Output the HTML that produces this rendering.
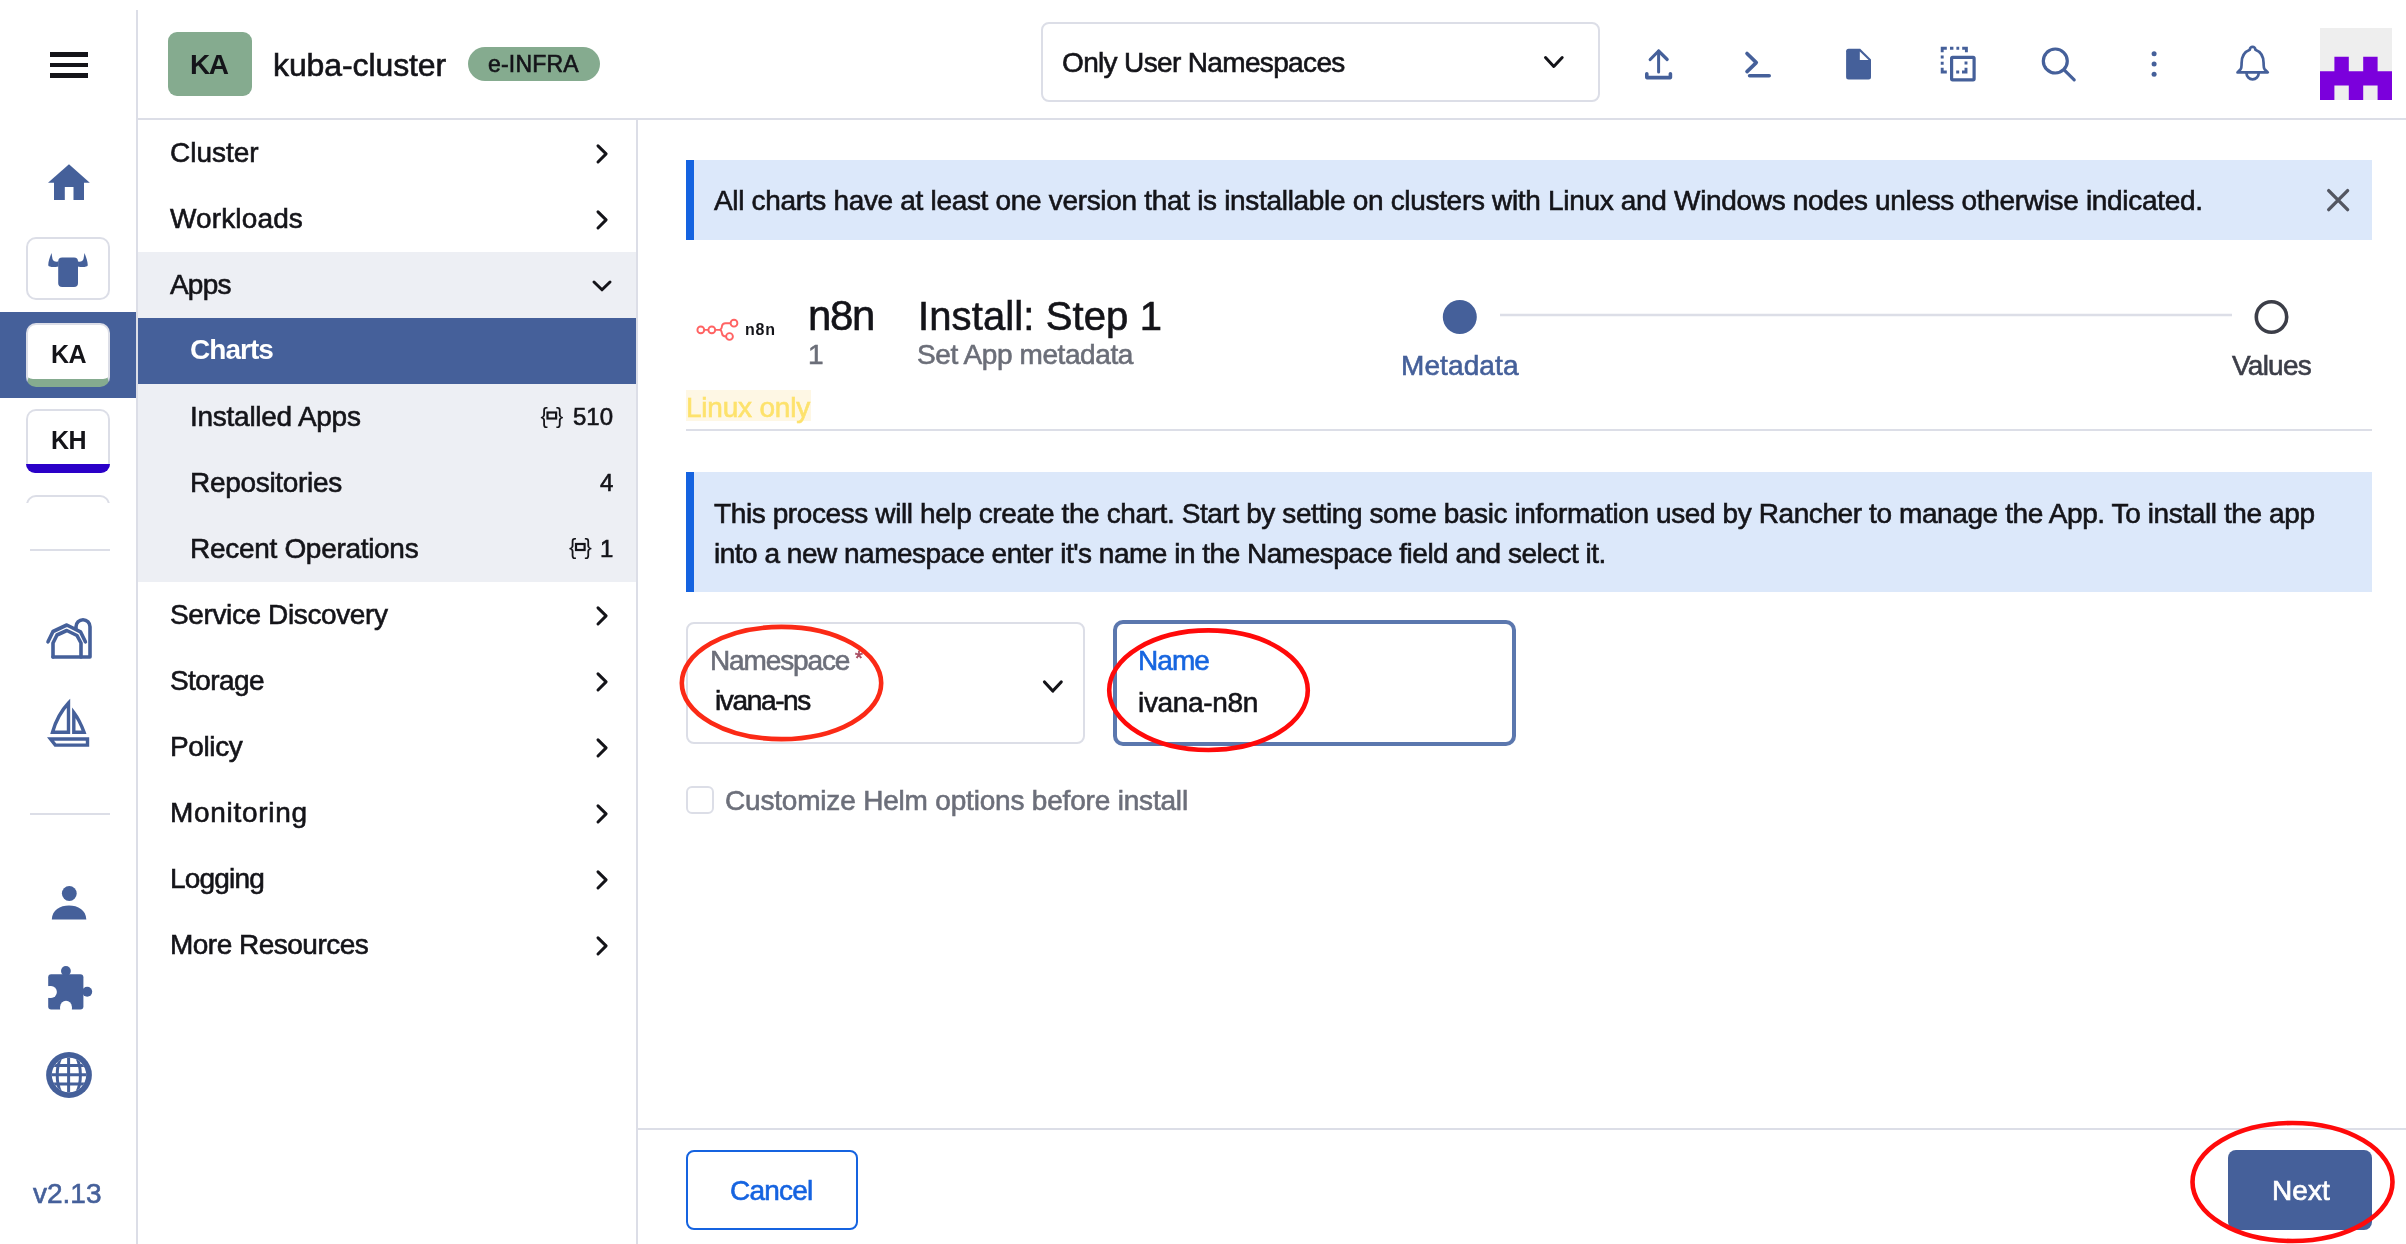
<!DOCTYPE html>
<html><head><meta charset="utf-8">
<style>
html,body{margin:0;padding:0;width:2406px;height:1244px;overflow:hidden;background:#fff;}
body{position:relative;font-family:"Liberation Sans",sans-serif;color:#141419;}
.a{position:absolute;}
.t{position:absolute;white-space:nowrap;line-height:1;will-change:transform;-webkit-text-stroke:0.6px currentColor;}
svg{position:absolute;display:block;overflow:visible;}
</style></head><body>

<!-- ===== LEFT RAIL ===== -->
<div class="a" style="left:136px;top:10px;width:2px;height:1234px;background:#dcdee7"></div>
<div class="a" style="left:50px;top:52px;width:38px;height:5px;background:#141419"></div>
<div class="a" style="left:50px;top:63px;width:38px;height:4px;background:#141419"></div>
<div class="a" style="left:50px;top:73px;width:38px;height:5px;background:#141419"></div>
<!-- home -->
<svg style="left:0;top:0" width="140" height="1244">
  <g fill="#45609a">
    <path d="M48 182.7 L69 164.2 L89.8 182.7 Z"/>
    <path d="M54 181 H84 V200 H73.5 V187 H64.8 V200 H54 Z"/>
  </g>
</svg>
<!-- bull box -->
<div class="a" style="left:26px;top:237px;width:80px;height:59px;border:2px solid #dcdee7;border-radius:10px;background:#fff"></div>
<svg style="left:0;top:0" width="140" height="320">
  <g fill="#45609a">
    <rect x="58.2" y="257.5" width="19.8" height="29.5" rx="4"/>
    <path d="M51.5 253 C50 257 48 262 48.3 265.5 C49 267 53 267.5 58.5 266.5 L58.5 261.5 C55 262 53 261 52.5 259 Z"/>
    <path d="M84.5 253 C86 257 88 262 87.7 265.5 C87 267 83 267.5 77.5 266.5 L77.5 261.5 C81 262 83 261 83.5 259 Z"/>
  </g>
</svg>
<!-- active band -->
<div class="a" style="left:0;top:312px;width:136px;height:86px;background:#45609a"></div>
<div class="a" style="left:26px;top:323px;width:80px;height:54px;border:2px solid #dcdee7;border-bottom:8px solid #85ab8f;border-radius:10px;background:#fff"></div>
<div class="t" style="left:51px;top:342px;font-size:25px;font-weight:bold;-webkit-text-stroke:0;letter-spacing:-0.5px">KA</div>
<!-- KH box -->
<div class="a" style="left:26px;top:409px;width:80px;height:62px;border:2px solid #dcdee7;border-bottom:0;border-radius:10px 10px 10px 10px;background:#fff;overflow:hidden"></div>
<div class="a" style="left:26px;top:464px;width:84px;height:9px;background:#2a00c8;border-radius:0 0 10px 10px"></div>
<div class="t" style="left:51px;top:428px;font-size:25px;font-weight:bold;-webkit-text-stroke:0;letter-spacing:-0.5px">KH</div>
<!-- partial third box -->
<div class="a" style="left:26px;top:495px;width:84px;height:8px;overflow:hidden">
  <div class="a" style="left:0;top:0;width:80px;height:40px;border:2px solid #dcdee7;border-radius:10px"></div>
</div>
<div class="a" style="left:30px;top:549px;width:80px;height:2px;background:#dcdee7"></div>
<!-- barn -->
<svg style="left:40px;top:610px" width="60" height="55">
  <g fill="none" stroke="#45609a" stroke-width="3.6" stroke-linecap="round" stroke-linejoin="round">
    <path d="M8 31.8 L13 21.5 L26.8 15 L40.5 21.8 L45.4 31.8"/>
    <path d="M13 47 V33 L17 25 L26.8 20.5 L37 25.5 L41 33 V47"/>
    <path d="M13 47 H50 V16.8 A7 7 0 0 0 36 16.8 V18.5"/>
  </g>
</svg>
<!-- sailboat -->
<svg style="left:0;top:0" width="140" height="760">
  <g fill="none" stroke="#45609a" stroke-width="3.4" stroke-linejoin="miter">
    <path d="M68.5 703 L68.5 732.2 L52.5 732.2 C56 720 61 711 68.5 703 Z"/>
    <path d="M73.8 712.5 L73.8 732.2 L84 732.2 C81 724 78 718 73.8 712.5 Z"/>
    <path d="M50.5 739 L87.5 739 L87.5 745.1 L55.3 745.1 Z"/>
  </g>
</svg>
<div class="a" style="left:30px;top:813px;width:80px;height:2px;background:#dcdee7"></div>
<!-- person -->
<svg style="left:0;top:0" width="140" height="1244">
  <g fill="#45609a">
    <circle cx="69.3" cy="893.5" r="7.4"/>
    <path d="M51.8 919.5 C52 910 60 905.5 69 905.5 C78 905.5 86 910 86.3 919.5 Z"/>
  </g>
  <!-- puzzle -->
  <g fill="#45609a">
    <rect x="48.2" y="974.3" width="35.2" height="35.2" rx="3"/>
    <circle cx="65.9" cy="971" r="4.9"/>
    <circle cx="87.2" cy="991.7" r="5"/>
  </g>
  <g fill="#fff">
    <circle cx="51" cy="992" r="5.9"/>
    <rect x="46" y="986.1" width="5" height="11.8"/>
    <circle cx="66" cy="1006.7" r="5.85"/>
    <rect x="60.15" y="1006.7" width="11.7" height="4"/>
  </g>
  <!-- globe -->
  <circle cx="69" cy="1075" r="22.9" fill="#45609a"/>
  <circle cx="69" cy="1075" r="17.2" fill="#fff"/>
  <clipPath id="gc"><circle cx="69" cy="1075" r="17.3"/></clipPath>
  <g fill="none" stroke="#45609a" stroke-width="3" clip-path="url(#gc)">
    <ellipse cx="68.8" cy="1075" rx="11.6" ry="24"/>
    <line x1="68.6" y1="1050" x2="68.6" y2="1100"/>
    <line x1="45" y1="1065.6" x2="93" y2="1065.6"/>
    <line x1="45" y1="1074.7" x2="93" y2="1074.7"/>
    <line x1="45" y1="1084" x2="93" y2="1084"/>
  </g>
</svg>
<div class="t" style="left:33px;top:1180px;font-size:28px;color:#45609a">v2.13</div>


<!-- ===== HEADER ===== -->
<div class="a" style="left:138px;top:118px;width:2268px;height:2px;background:#dcdee7"></div>
<div class="a" style="left:168px;top:32px;width:84px;height:64px;background:#85ab8f;border-radius:9px"></div>
<div class="t" style="left:190px;top:51px;font-size:28px;font-weight:bold;-webkit-text-stroke:0;letter-spacing:-1.5px">KA</div>
<div class="t" style="left:273px;top:49px;font-size:32px;letter-spacing:-0.1px">kuba-cluster</div>
<div class="a" style="left:468px;top:47px;width:132px;height:34px;background:#85ab8f;border-radius:17px"></div>
<div class="t" style="left:488px;top:53px;font-size:23px;letter-spacing:0.2px">e-INFRA</div>
<!-- namespace select -->
<div class="a" style="left:1041px;top:22px;width:555px;height:76px;border:2px solid #dcdee7;border-radius:8px"></div>
<div class="t" style="left:1062px;top:48.5px;font-size:28px;letter-spacing:-0.65px">Only User Namespaces</div>
<svg style="left:0;top:0" width="2406" height="118">
  <g fill="none" stroke="#141419" stroke-width="3" stroke-linecap="round" stroke-linejoin="round">
    <path d="M1545.5 57.5 L1553.8 66.5 L1562.2 57.5"/>
  </g>
  <g fill="none" stroke="#45609a" stroke-linecap="round" stroke-linejoin="round">
    <!-- upload -->
    <path d="M1658.6 51 V72" stroke-width="3"/>
    <path d="M1650.2 59.5 L1658.6 51 L1667.2 59.5" stroke-width="3.2"/>
    <path d="M1646.8 73.8 V77.6 H1670.4 V73.8" stroke-width="3.6"/>
    <!-- terminal -->
    <path d="M1747 53.5 L1756.3 62.6 L1747 71.6" stroke-width="3.6"/>
    <path d="M1749.6 75.8 H1769.2" stroke-width="3.6"/>
    <!-- copy -->
    <path d="M1942.2 52.2 V48.2 H1946.8 M1950 48.2 H1953.4 M1956.4 48.2 H1959.2 M1962.2 48.2 H1966.4 V52.2 M1942.2 55.6 V58.6 M1942.2 61.8 V64.8 M1942.2 67.8 V72 H1946.8" stroke-width="2.9" stroke-linecap="butt" stroke-linejoin="miter"/>
    <rect x="1951.6" y="57.4" width="22.5" height="22.4" rx="1" stroke-width="3.2"/>
    <path d="M1966 61.4 V64.6 M1966 67.8 V72 H1962 M1959.2 72 H1956.2" stroke-width="2.9" stroke-linecap="butt" stroke-linejoin="miter"/>
    <!-- search -->
    <circle cx="2055.3" cy="61" r="12" stroke-width="3.2"/>
    <path d="M2064.6 70.3 L2074.2 79.8" stroke-width="3.2"/>
    <!-- bell -->
    <path d="M2237.5 72.4 L2240.6 69.2 C2241.6 68 2241.6 66 2241.6 63 C2241.6 57 2243.2 52.2 2249.8 49.7 A2.5 2.5 0 1 1 2255.4 49.7 C2262 52.2 2263.6 57 2263.6 63 C2263.6 66 2263.6 68 2264.6 69.2 L2267.8 72.4 Z" stroke-width="2.7"/>
    <path d="M2246.5 73.2 A6.1 6.1 0 0 0 2258.7 73.2" stroke-width="2.7"/>
  </g>
  <g fill="#45609a">
    <!-- file -->
    <path d="M1848.6 48.8 H1860.2 L1871 59.6 V77 A2.5 2.5 0 0 1 1868.5 79.5 H1848.6 A2.5 2.5 0 0 1 1846.1 77 V51.3 A2.5 2.5 0 0 1 1848.6 48.8 Z"/>
    <path d="M1859.8 51.4 V60 H1868.6 Z" fill="#fff"/>
    <!-- kebab -->
    <circle cx="2154.1" cy="53.7" r="2.5"/>
    <circle cx="2154.1" cy="63.9" r="2.5"/>
    <circle cx="2154.1" cy="74.2" r="2.5"/>
  </g>
</svg>
<!-- avatar -->
<div class="a" style="left:2320px;top:28px;width:72px;height:72px;background:#eeeeee"></div>
<svg style="left:2320px;top:28px" width="72" height="72"><path fill="#7b00dc" d="M14.4 28.8H28.8V43.2H43.2V28.8H57.6V43.2H72V72H57.6V57.6H43.2V72H28.8V57.6H14.4V72H0V43.2H14.4Z"/></svg>


<!-- ===== NAV ===== -->
<div class="a" style="left:138px;top:252px;width:498px;height:330px;background:#edeff4"></div>
<div class="a" style="left:138px;top:318px;width:498px;height:66px;background:#45609a"></div>
<div class="t" style="left:170px;top:139.0px;font-size:28px;letter-spacing:-0.000px">Cluster</div>
<div class="t" style="left:170px;top:205.0px;font-size:28px;letter-spacing:0.135px">Workloads</div>
<div class="t" style="left:170px;top:271.0px;font-size:28px;letter-spacing:-0.807px">Apps</div>
<div class="t" style="left:170px;top:601.0px;font-size:28px;letter-spacing:-0.381px">Service Discovery</div>
<div class="t" style="left:170px;top:667.0px;font-size:28px;letter-spacing:-0.585px">Storage</div>
<div class="t" style="left:170px;top:733.0px;font-size:28px;letter-spacing:-0.381px">Policy</div>
<div class="t" style="left:170px;top:799.0px;font-size:28px;letter-spacing:0.703px">Monitoring</div>
<div class="t" style="left:170px;top:865.0px;font-size:28px;letter-spacing:-0.812px">Logging</div>
<div class="t" style="left:170px;top:931.0px;font-size:28px;letter-spacing:-0.511px">More Resources</div>
<svg style="left:0;top:0" width="640" height="1244"><g fill="none" stroke="#141419" stroke-width="3" stroke-linecap="round" stroke-linejoin="round"><path d="M598 145.9 L606.1 153.9 L598 162"/><path d="M598 211.9 L606.1 219.9 L598 228"/><path d="M594 282 L602 289.8 L610 282"/><path d="M598 607.9 L606.1 615.9 L598 624"/><path d="M598 673.9 L606.1 681.9 L598 690"/><path d="M598 739.9 L606.1 747.9 L598 756"/><path d="M598 805.9 L606.1 813.9 L598 822"/><path d="M598 871.9 L606.1 879.9 L598 888"/><path d="M598 937.9 L606.1 945.9 L598 954"/></g></svg>
<div class="t" style="left:190px;top:335.8px;font-size:28px;font-weight:bold;-webkit-text-stroke:0;color:#fff;letter-spacing:-0.951px">Charts</div>
<div class="t" style="left:190px;top:403.0px;font-size:28px;letter-spacing:-0.263px">Installed Apps</div>
<div class="t" style="left:190px;top:469.0px;font-size:28px;letter-spacing:-0.305px">Repositories</div>
<div class="t" style="left:190px;top:535.0px;font-size:28px;letter-spacing:-0.301px">Recent Operations</div>
<div class="t" style="right:1792.5px;top:404.9px;font-size:24px">510</div>
<div class="t" style="right:1792.5px;top:470.7px;font-size:24px">4</div>
<div class="t" style="right:1792.5px;top:536.9px;font-size:24px">1</div>
<svg style="left:0;top:0" width="640" height="1244"><text x="540.5" y="422.5" font-size="22" font-family="Liberation Sans" fill="#141419">{</text><text x="556.0" y="422.5" font-size="22" font-family="Liberation Sans" fill="#141419">}</text><rect x="547.5" y="412.5" width="8.6" height="6" fill="none" stroke="#141419" stroke-width="2.2"/><text x="569" y="554" font-size="22" font-family="Liberation Sans" fill="#141419">{</text><text x="584.5" y="554" font-size="22" font-family="Liberation Sans" fill="#141419">}</text><rect x="576" y="544" width="8.6" height="6" fill="none" stroke="#141419" stroke-width="2.2"/></svg>
<div class="a" style="left:636px;top:120px;width:2px;height:1124px;background:#dcdee7"></div>

<!-- ===== MAIN ===== -->
<div class="a" style="left:686px;top:160px;width:1686px;height:80px;background:#dce8fa"></div>
<div class="a" style="left:686px;top:160px;width:8px;height:80px;background:#1563e0"></div>
<div class="t" style="left:714px;top:187.0px;font-size:28px;letter-spacing:-0.318px">All charts have at least one version that is installable on clusters with Linux and Windows nodes unless otherwise indicated.</div>
<svg style="left:0;top:0" width="2406" height="1244"><g fill="none" stroke="#535661" stroke-width="3.4" stroke-linecap="round"><path d="M2328.7 190.6 L2347.6 209.6 M2347.6 190.6 L2328.7 209.6"/></g></svg>
<svg style="left:0;top:0" width="2406" height="1244"><g fill="none" stroke="#ff6363" stroke-width="1.9">
<circle cx="700.8" cy="329.9" r="3.4"/><circle cx="711.8" cy="329.9" r="3.4"/>
<circle cx="734" cy="323.2" r="3.4"/><circle cx="729.5" cy="336.5" r="3.4"/>
<path d="M704.2 329.9 H708.4 M715.2 329.9 H719.5 C721.5 329.9 721.8 328 722 326 C722.3 324 723.5 323.2 725.5 323.2 H730.6 M719.5 329.9 C721.5 329.9 721.8 331.8 722 333.5 C722.3 335.5 724 336.5 726.1 336.5"/>
</g></svg>
<div class="t" style="left:745px;top:321.7px;font-size:16px;font-weight:bold;-webkit-text-stroke:0;letter-spacing:0.744px">n8n</div>
<div class="t" style="left:807.5px;top:295.0px;font-size:42px;letter-spacing:-1.359px">n8n</div>
<div class="t" style="left:808px;top:340.6px;font-size:28px;color:#6b6e78">1</div>
<div class="t" style="left:918px;top:295.8px;font-size:40px;letter-spacing:0.108px">Install: Step 1</div>
<div class="t" style="left:917px;top:340.7px;font-size:28px;color:#6b6e78;letter-spacing:-0.416px">Set App metadata</div>
<div class="a" style="left:686px;top:390px;width:125px;height:31px;background:#fef7e4"></div>
<div class="t" style="left:686px;top:393.6px;font-size:28px;color:#fde26c;letter-spacing:-0.211px">Linux only</div>
<div class="a" style="left:686px;top:429px;width:1686px;height:2px;background:#dcdee7"></div>
<svg style="left:0;top:0" width="2406" height="1244">
<circle cx="1459.8" cy="317" r="17" fill="#45609a"/>
<line x1="1500" y1="315" x2="2232" y2="315" stroke="#dcdee7" stroke-width="2.4"/>
<circle cx="2271.5" cy="317" r="15.2" fill="none" stroke="#3c3e48" stroke-width="3.6"/>
</svg>
<div class="t" style="left:1401px;top:351.6px;font-size:28px;color:#45609a;letter-spacing:0.102px">Metadata</div>
<div class="t" style="left:2232px;top:351.6px;font-size:28px;color:#3c3e48;letter-spacing:-0.758px">Values</div>
<div class="a" style="left:686px;top:472px;width:1686px;height:120px;background:#dce8fa"></div>
<div class="a" style="left:686px;top:472px;width:8px;height:120px;background:#1563e0"></div>
<div class="t" style="left:714px;top:499.7px;font-size:28px;letter-spacing:-0.398px">This process will help create the chart. Start by setting some basic information used by Rancher to manage the App. To install the app</div>
<div class="t" style="left:714px;top:539.8px;font-size:28px;letter-spacing:-0.494px">into a new namespace enter it's name in the Namespace field and select it.</div>
<div class="a" style="left:686px;top:622px;width:395px;height:118px;border:2px solid #dcdee7;border-radius:8px"></div>
<div class="t" style="left:709.5px;top:646.7px;font-size:28px;color:#6c6f7a;letter-spacing:-1.126px">Namespace</div>
<div class="t" style="left:855px;top:648px;font-size:20px;color:#a84b5f">*</div>
<div class="t" style="left:715px;top:686.5px;font-size:28px;letter-spacing:-1.357px">ivana-ns</div>
<svg style="left:0;top:0" width="2406" height="1244"><path d="M1044.5 682 L1052.8 691 L1061.2 682" fill="none" stroke="#141419" stroke-width="3.2" stroke-linecap="round" stroke-linejoin="round"/></svg>
<div class="a" style="left:1113px;top:620px;width:395px;height:117.5px;border:4px solid #5b77ae;border-radius:10px"></div>
<div class="t" style="left:1138px;top:646.7px;font-size:28px;color:#1766e0;letter-spacing:-0.926px">Name</div>
<div class="t" style="left:1138px;top:688.9px;font-size:28px;letter-spacing:-0.335px">ivana-n8n</div>
<div class="a" style="left:686px;top:786px;width:23.5px;height:23.5px;border:2px solid #dcdee7;border-radius:6px"></div>
<div class="t" style="left:725px;top:786.8px;font-size:28px;color:#6c6f7a;letter-spacing:-0.191px">Customize Helm options before install</div>
<div class="a" style="left:638px;top:1128px;width:1768px;height:2px;background:#dcdee7"></div>
<div class="a" style="left:686px;top:1150px;width:168px;height:75.5px;border:2px solid #1563e0;border-radius:8px"></div>
<div class="t" style="left:730px;top:1177.0px;font-size:28px;color:#1563e0;letter-spacing:-0.779px">Cancel</div>
<div class="a" style="left:2228px;top:1150px;width:144px;height:80px;background:#45609a;border-radius:8px"></div>
<div class="t" style="left:2271.5px;top:1176.8px;font-size:28px;color:#fff;letter-spacing:0.105px;-webkit-text-stroke:0.7px #fff">Next</div>
<svg style="left:0;top:0" width="2406" height="1244"><g fill="none" stroke-width="4.6">
<ellipse cx="781.5" cy="683" rx="99.7" ry="56.1" stroke="#fb2a16"/>
<ellipse cx="1208.5" cy="690.2" rx="99.3" ry="59.8" stroke="#ff0a0a"/>
<ellipse cx="2292.5" cy="1182" rx="100" ry="59" stroke="#ff0a0a"/>
</g></svg>

</body></html>
